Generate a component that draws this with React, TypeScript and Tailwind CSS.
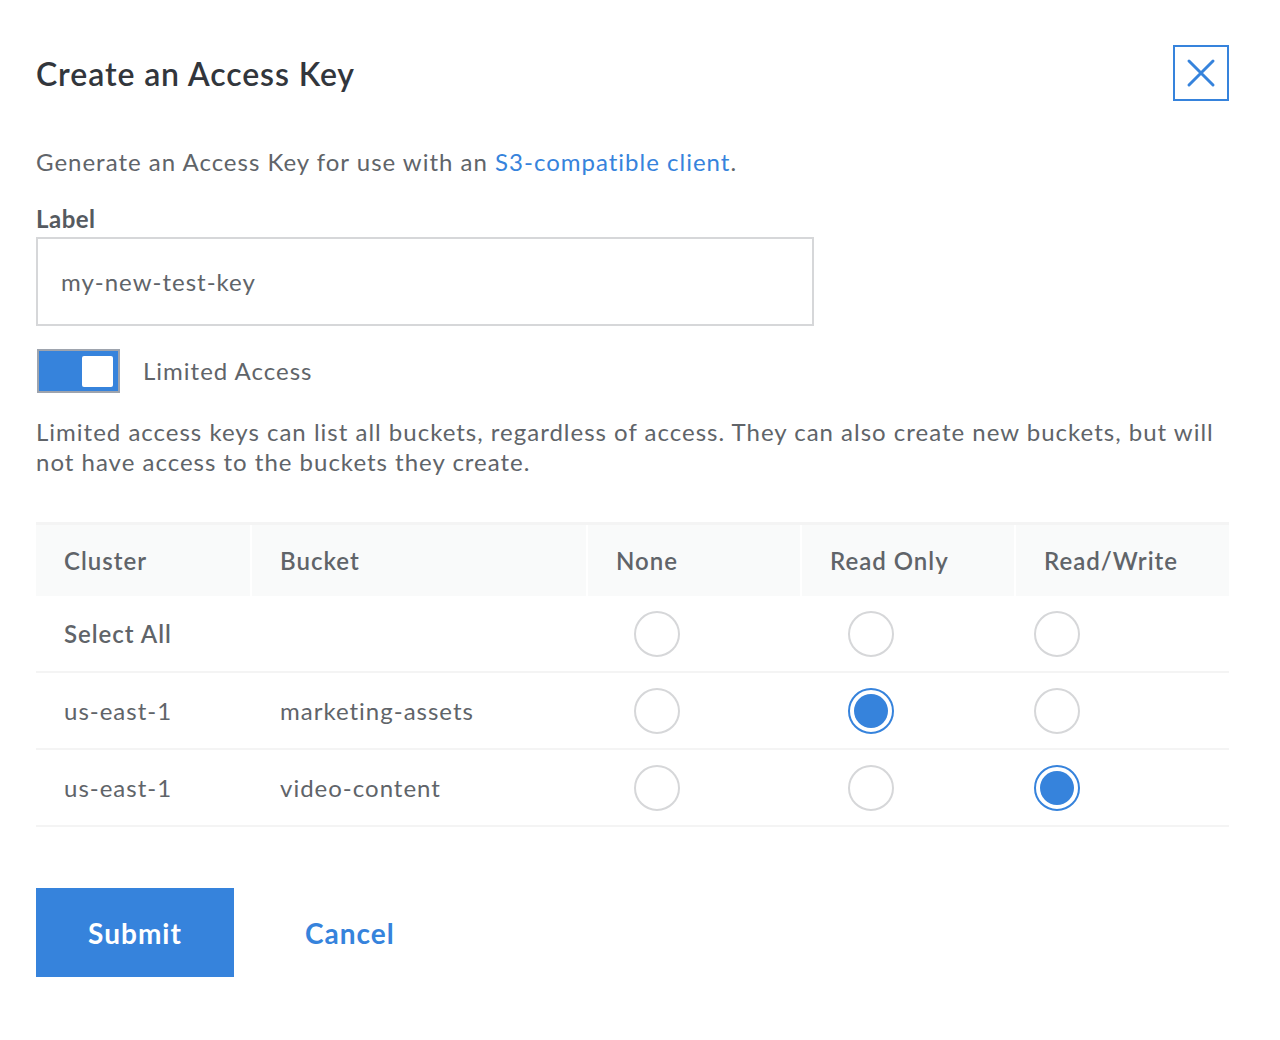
import React from "react";

const font = { fontFamily: "Lato, 'Noto Sans', sans-serif" };

function Radio({ checked }: { checked?: boolean }) {
  if (checked) {
    return (
      <div className="w-[46px] h-[46px] rounded-full border-2 border-[#3683dc] flex items-center justify-center">
        <div className="w-[34px] h-[34px] rounded-full bg-[#3683dc]" />
      </div>
    );
  }
  return <div className="w-[46px] h-[46px] rounded-full border-2 border-[#d6d7d9]" />;
}

type Row = { cluster: string; bucket: string; sel: number; bold?: boolean };

const rows: Row[] = [
  { cluster: "Select All", bucket: "", sel: -1, bold: true },
  { cluster: "us-east-1", bucket: "marketing-assets", sel: 1 },
  { cluster: "us-east-1", bucket: "video-content", sel: 2 },
];

export default function App() {
  return (
    <div className="w-[1280px] h-[1040px] bg-white pl-[36px] pr-[51px] pt-[45px] tracking-[1px]" style={font}>
      <div className="flex items-start justify-between">
        <h2 className="mt-[9px] text-[32px] leading-[40px] font-semibold tracking-[0.9px] text-[#32363c]">Create an Access Key</h2>
        <button className="w-[56px] h-[56px] border-2 border-[#3683dc] flex items-center justify-center">
          <svg width="30" height="30" viewBox="0 0 30 30">
            <path d="M3 3 L27 27 M27 3 L3 27" stroke="#3683dc" strokeWidth="3" strokeLinecap="round" />
          </svg>
        </button>
      </div>

      <p className="mt-[46px] text-[24px] leading-[30px] text-[#606469]">
        Generate an Access Key for use with an <span className="text-[#3683dc]">S3-compatible client</span>.
      </p>

      <div className="mt-[27px] text-[24px] leading-[30px] font-bold tracking-[0.5px] text-[#555a60]">Label</div>
      <div className="mt-[3px] w-[778px] h-[89px] border-2 border-[#d6d7d9] flex items-center pl-[23px] text-[24px] text-[#606469]">
        my-new-test-key
      </div>

      <div className="mt-[23px] flex items-center">
        <div className="ml-[1px] w-[83px] h-[44px] bg-[#3683dc] border-2 border-[#9ea4ae] flex items-center justify-end pr-[5px]">
          <div className="w-[31px] h-[31px] bg-white rounded-[2px]" />
        </div>
        <span className="ml-[23px] text-[24px] leading-[30px] text-[#606469]">Limited Access</span>
      </div>

      <p className="mt-[24px] text-[24px] leading-[30px] text-[#606469]">
        Limited access keys can list all buckets, regardless of access. They can also create new buckets, but will not have access to the buckets they create.
      </p>

      <div className="mt-[45px]">
        <div className="border-t-[3px] border-[#f4f4f4] flex gap-[2px] h-[74px] text-[24px] font-semibold text-[#606469]">
          <div className="w-[214px] bg-[#f9fafa] flex items-center pl-[28px]">Cluster</div>
          <div className="w-[334px] bg-[#f9fafa] flex items-center pl-[28px]">Bucket</div>
          <div className="w-[212px] bg-[#f9fafa] flex items-center pl-[28px]">None</div>
          <div className="w-[212px] bg-[#f9fafa] flex items-center pl-[28px]">Read Only</div>
          <div className="flex-1 bg-[#f9fafa] flex items-center pl-[28px]">Read/Write</div>
        </div>
        {rows.map((r, i) => (
          <div key={i} className="flex h-[77px] border-b-2 border-[#f4f4f4] text-[24px] text-[#606469]">
            <div className={"w-[216px] flex items-center pl-[28px] " + (r.bold ? "font-semibold" : "")}>{r.cluster}</div>
            <div className="w-[336px] flex items-center pl-[28px]">{r.bucket}</div>
            <div className="w-[214px] flex items-center pl-[46px]">
              <Radio checked={r.sel === 0} />
            </div>
            <div className="w-[214px] flex items-center pl-[46px]">
              <Radio checked={r.sel === 1} />
            </div>
            <div className="flex-1 flex items-center pl-[18px]">
              <Radio checked={r.sel === 2} />
            </div>
          </div>
        ))}
      </div>

      <div className="mt-[61px] flex items-center">
        <button className="w-[198px] h-[89px] bg-[#3683dc] text-white text-[28px] font-bold">Submit</button>
        <button className="ml-[71px] text-[#3683dc] text-[28px] font-bold">Cancel</button>
      </div>
    </div>
  );
}
